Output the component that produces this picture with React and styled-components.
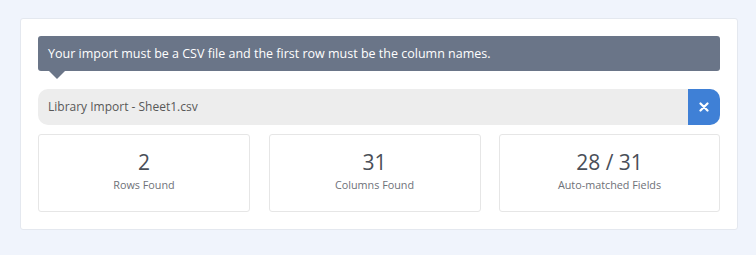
import styled, { createGlobalStyle } from "styled-components";

const GlobalStyle = createGlobalStyle`
  html, body {
    margin: 0;
    padding: 0;
    background: #f0f4fc;
    font-family: "Open Sans", "Liberation Sans", sans-serif;
  }
`;

const Page = styled.div`
  padding: 18px 18px 25px 20px;
`;

const Card = styled.div`
  background: #fff;
  border: 1px solid #e4e8ef;
  border-radius: 3px;
  padding: 17px 17px 17px 17px;
  display: flex;
  flex-direction: column;
`;

const Tooltip = styled.div`
  position: relative;
  background: #6a7588;
  color: #fff;
  font-size: 12.5px;
  line-height: 35px;
  height: 35px;
  padding: 0 10px;
  border-radius: 3px;
  margin-bottom: 18px;

  &::after {
    content: "";
    position: absolute;
    left: 11px;
    top: 100%;
    border-left: 8px solid transparent;
    border-right: 8px solid transparent;
    border-top: 8px solid #6a7588;
  }
`;

const FileBar = styled.div`
  display: flex;
  height: 36px;
  border-radius: 10px;
  overflow: hidden;
  background: #ededed;
  margin-bottom: 9px;
`;

const FileName = styled.div`
  flex: 1;
  padding: 0 10px;
  line-height: 36px;
  font-size: 12px;
  color: #585858;
`;

const ClearButton = styled.button`
  width: 32px;
  border: none;
  padding: 0;
  background: #3f80d6;
  display: flex;
  align-items: center;
  justify-content: center;
  cursor: pointer;
`;

const Stats = styled.div`
  display: grid;
  grid-template-columns: 212px 212px 1fr;
  column-gap: 18.5px;
`;

const Stat = styled.div`
  height: 78px;
  border: 1px solid #e6e6e6;
  border-radius: 3px;
  display: flex;
  flex-direction: column;
  align-items: center;
  padding-top: 12px;
  box-sizing: border-box;
`;

const Value = styled.div`
  font-size: 21px;
  line-height: 30px;
  color: #4a4f58;
`;

const Label = styled.div`
  font-size: 10.8px;
  line-height: 16px;
  color: #6e7178;
`;

const stats = [
  { value: "2", label: "Rows Found" },
  { value: "31", label: "Columns Found" },
  { value: "28 / 31", label: "Auto-matched Fields" },
];

export default function App() {
  return (
    <Page>
      <GlobalStyle />
      <Card>
        <Tooltip>
          Your import must be a CSV file and the first row must be the column names.
        </Tooltip>
        <FileBar>
          <FileName>Library Import - Sheet1.csv</FileName>
          <ClearButton aria-label="Remove file">
            <svg width="10" height="10" viewBox="0 0 10 10">
              <path d="M1.5 1.5 L8.5 8.5 M8.5 1.5 L1.5 8.5" stroke="#fff" strokeWidth="2.2" strokeLinecap="round" />
            </svg>
          </ClearButton>
        </FileBar>
        <Stats>
          {stats.map((s) => (
            <Stat key={s.label}>
              <Value>{s.value}</Value>
              <Label>{s.label}</Label>
            </Stat>
          ))}
        </Stats>
      </Card>
    </Page>
  );
}
